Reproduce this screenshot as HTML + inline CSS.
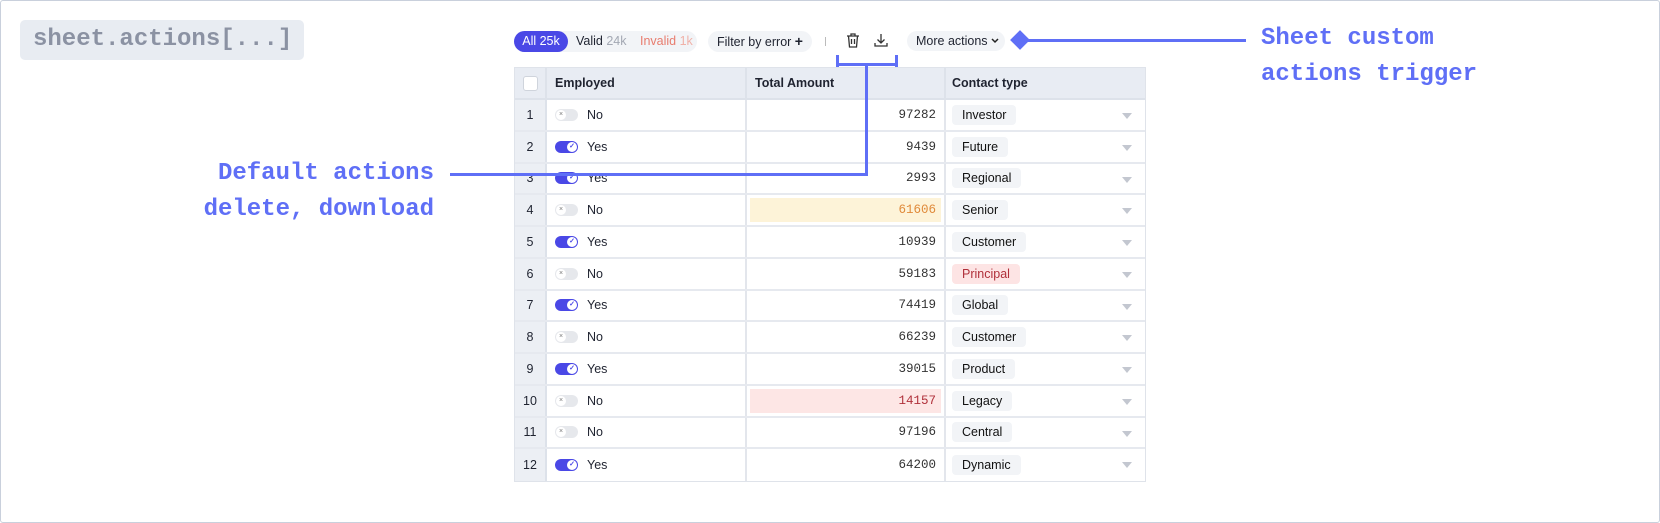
<!DOCTYPE html>
<html><head><meta charset="utf-8"><style>
*{box-sizing:border-box;margin:0;padding:0}
body{width:1660px;height:523px;background:#fff;position:relative;overflow:hidden;font-family:"Liberation Sans",Arial,sans-serif}
.frame{position:absolute;left:0;top:0;width:1660px;height:523px;border:1px solid #c9d0dc;border-radius:3px}
.code{position:absolute;left:20px;top:20px;width:284px;height:40px;background:#e8ecf2;border-radius:5px;font:bold 24px/40px "Liberation Mono",monospace;color:#8b92a3;padding-left:13px}
.ann{position:absolute;font:bold 24px/36px "Liberation Mono",monospace;color:#5f6ff6}
.ln{position:absolute;background:#5f6ff6}
.tb{position:absolute;top:31px;height:21px;font-size:12.5px;line-height:21px;color:#1f2330;white-space:nowrap}
.seg{position:absolute;left:514px;top:31px;width:183px;height:21px;border-radius:11px;background:#f2f4f7}
.all{position:absolute;left:514px;top:31px;width:54px;height:21px;border-radius:11px;background:#4a48e6;color:#fff;font-size:12.5px;line-height:21px;text-align:center;white-space:nowrap}
.pill{background:#f2f4f7;border-radius:11px;padding:0 9px}
.tbl{position:absolute;left:514px;top:67px;width:632px;border:1px solid #dfe3ea}
.hd{height:32px;background:#e8ecf3;display:flex;border-bottom:2px solid #dde2ea}
.row{height:31.75px;display:flex;border-bottom:2px solid #e6e9ef;font-size:12.5px;color:#1f2330}
.row:last-child{border-bottom:none}
.c0{width:32px;flex:none;border-right:2px solid #dde2ea;display:flex;align-items:center;justify-content:center}
.row .c0{background:#eceff4}
.c1{width:200px;flex:none;border-right:2px solid #e3e6ec;display:flex;align-items:center;padding-left:8px}
.c2{width:199px;flex:none;border-right:2px solid #e3e6ec;display:flex;align-items:center;justify-content:flex-end;padding-right:8px;font:12.5px "Liberation Mono",monospace;color:#333;position:relative}
.c3{flex:1;display:flex;align-items:center;padding-left:6px;position:relative}
.hd div{font-weight:bold;font-size:12.5px;color:#1f2330}
.tg{width:23px;height:12px;border-radius:6px;margin-right:9px;position:relative}
.tg.on{background:#4a48e6}.tg.off{background:#e6e8ec}
.tg i{position:absolute;top:1px;width:10px;height:10px;border-radius:50%;background:#fff;font-style:normal;font-size:7px;line-height:10px;text-align:center;color:#777}
.tg.on i{right:1px;color:#4a48e6;font-weight:bold}.tg.off i{left:1px}
.tag{background:#f2f4f7;border-radius:4px;padding:0 10px;height:20px;line-height:20px;font-size:12.5px;color:#111}
.tri{position:absolute;right:13px;top:13px;width:0;height:0;border-left:5px solid transparent;border-right:5px solid transparent;border-top:6px solid #c3c7d0}
.hl{position:absolute;left:3px;right:3px;top:3px;bottom:3px;z-index:0}
.c2 span{position:relative;z-index:1}
</style></head><body>
<div class="frame"></div>
<div class="code">sheet.actions[...]</div>

<div class="seg"></div>
<div class="all">All 25k</div>
<div class="tb" style="left:576px">Valid <span style="color:#a3a8b3">24k</span></div>
<div class="tb" style="left:640px;color:#e87c6e">Invalid <span style="color:#f0b1a8">1k</span></div>
<div class="tb pill" style="left:708px;width:104px">Filter by error <b style="font-size:14px">+</b></div>
<div class="ln" style="left:825px;top:37px;width:1px;height:9px;background:#bbb"></div>
<svg style="position:absolute;left:845px;top:32px" width="16" height="17" viewBox="0 0 16 17" fill="none" stroke="#333" stroke-width="1.3"><path d="M2 4h12M6 4V2h4v2M3.5 4l1 11h7l1-11M6.5 7v5M9.5 7v5"/></svg>
<svg style="position:absolute;left:873px;top:32px" width="16" height="17" viewBox="0 0 16 17" fill="none" stroke="#333" stroke-width="1.3"><path d="M8 2v9M4.5 7.5L8 11l3.5-3.5M2 11v3h12v-3"/></svg>
<div class="tb pill" style="left:907px;width:98px;height:20px;line-height:20px;top:31px">More actions <svg width="8" height="6" viewBox="0 0 8 6" style="vertical-align:1px"><path d="M1 1l3 3 3-3" fill="none" stroke="#222" stroke-width="1.5"/></svg></div>
<div style="position:absolute;left:1013px;top:33px;width:14px;height:14px;background:#5f6ff6;transform:rotate(45deg)"></div>
<div class="ln" style="left:1020px;top:39px;width:226px;height:3px"></div>
<div class="ann" style="left:1261px;top:21px">Sheet custom<br>actions trigger</div>

<div class="ln" style="left:836px;top:55px;width:3px;height:19px"></div>
<div class="ln" style="left:895px;top:55px;width:3px;height:19px"></div>
<div class="ln" style="left:836px;top:63px;width:62px;height:3px"></div>
<div class="ln" style="left:865px;top:63px;width:3px;height:112px;z-index:5"></div>
<div class="ln" style="left:450px;top:173px;width:418px;height:3px;z-index:5"></div>
<div class="ann" style="left:200px;top:156px;text-align:right;width:234px">Default actions<br>delete, download</div>

<div class="tbl">
<div class="hd"><div class="c0" style="background:transparent"><span style="width:15px;height:15px;background:#fff;border:1px solid #cfd4dc;border-radius:3px;display:block"></span></div><div class="c1" style="border-color:#dde2ea">Employed</div><div class="c2" style="justify-content:flex-start;padding-left:8px;font:bold 12.5px 'Liberation Sans',sans-serif;color:#1f2330;border-color:#dde2ea">Total Amount</div><div class="c3">Contact type</div></div>
<div class="row"><div class="c0">1</div><div class="c1"><span class="tg off"><i>×</i></span>No</div><div class="c2"><span>97282</span></div><div class="c3"><span class="tag">Investor</span><span class="tri"></span></div></div>
<div class="row"><div class="c0">2</div><div class="c1"><span class="tg on"><i>✓</i></span>Yes</div><div class="c2"><span>9439</span></div><div class="c3"><span class="tag">Future</span><span class="tri"></span></div></div>
<div class="row"><div class="c0">3</div><div class="c1"><span class="tg on"><i>✓</i></span>Yes</div><div class="c2"><span>2993</span></div><div class="c3"><span class="tag">Regional</span><span class="tri"></span></div></div>
<div class="row"><div class="c0">4</div><div class="c1"><span class="tg off"><i>×</i></span>No</div><div class="c2"><div class="hl" style="background:#fdf3d8"></div><span style="color:#e08a3a">61606</span></div><div class="c3"><span class="tag">Senior</span><span class="tri"></span></div></div>
<div class="row"><div class="c0">5</div><div class="c1"><span class="tg on"><i>✓</i></span>Yes</div><div class="c2"><span>10939</span></div><div class="c3"><span class="tag">Customer</span><span class="tri"></span></div></div>
<div class="row"><div class="c0">6</div><div class="c1"><span class="tg off"><i>×</i></span>No</div><div class="c2"><span>59183</span></div><div class="c3"><span class="tag" style="background:#fde4e4;color:#b0303a">Principal</span><span class="tri"></span></div></div>
<div class="row"><div class="c0">7</div><div class="c1"><span class="tg on"><i>✓</i></span>Yes</div><div class="c2"><span>74419</span></div><div class="c3"><span class="tag">Global</span><span class="tri"></span></div></div>
<div class="row"><div class="c0">8</div><div class="c1"><span class="tg off"><i>×</i></span>No</div><div class="c2"><span>66239</span></div><div class="c3"><span class="tag">Customer</span><span class="tri"></span></div></div>
<div class="row"><div class="c0">9</div><div class="c1"><span class="tg on"><i>✓</i></span>Yes</div><div class="c2"><span>39015</span></div><div class="c3"><span class="tag">Product</span><span class="tri"></span></div></div>
<div class="row"><div class="c0">10</div><div class="c1"><span class="tg off"><i>×</i></span>No</div><div class="c2"><div class="hl" style="background:#fde6e5"></div><span style="color:#b0303a">14157</span></div><div class="c3"><span class="tag">Legacy</span><span class="tri"></span></div></div>
<div class="row"><div class="c0">11</div><div class="c1"><span class="tg off"><i>×</i></span>No</div><div class="c2"><span>97196</span></div><div class="c3"><span class="tag">Central</span><span class="tri"></span></div></div>
<div class="row"><div class="c0">12</div><div class="c1"><span class="tg on"><i>✓</i></span>Yes</div><div class="c2"><span>64200</span></div><div class="c3"><span class="tag">Dynamic</span><span class="tri"></span></div></div>
</div>
</body></html>
